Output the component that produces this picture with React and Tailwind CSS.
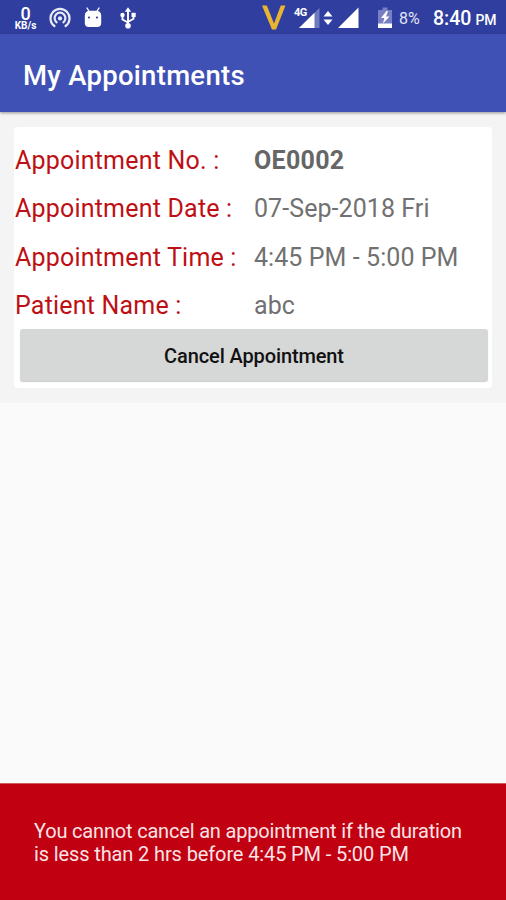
import React from 'react';

const appointment = [
  { label: 'Appointment No. :', value: 'OE0002', bold: true },
  { label: 'Appointment Date :', value: '07-Sep-2018 Fri' },
  { label: 'Appointment Time :', value: '4:45 PM - 5:00 PM' },
  { label: 'Patient Name :', value: 'abc' },
];

const HotspotIcon = () => (
  <svg className="ml-[11px] h-[22px] w-[22px] shrink-0" viewBox="0 0 22 22" fill="none" stroke="#e8eaf6" strokeWidth="2.2" strokeLinecap="round">
    <path d="M5.4 19a9.500 9.500 0 1 1 11.200 0" />
    <path d="M7.600 15.300a5.400 5.400 0 1 1 6.800 0" />
    <circle cx="11" cy="11.400" r="2.100" fill="#e8eaf6" stroke="none" />
  </svg>
);

const AndroidIcon = () => (
  <svg className="ml-[13px] h-[22px] w-[18px] shrink-0" viewBox="0 0 18 22">
    <path d="M3 1l2.500 4M15 1l-2.500 4" stroke="#fff" strokeWidth="1.4" strokeLinecap="round" />
    <path d="M0.800 8.500c0-3 2-4.800 5-4.800h6.400c3 0 5 1.800 5 4.800V16a4 4 0 0 1-4 4H4.800a4 4 0 0 1-4-4z" fill="#fff" />
    <circle cx="5" cy="10.500" r="1.100" fill="#303f9f" />
    <circle cx="13" cy="10.500" r="1.100" fill="#303f9f" />
  </svg>
);

const UsbIcon = () => (
  <svg className="ml-[18px] h-[22px] w-4 shrink-0" viewBox="0 0 16 22" fill="none" stroke="#fff" strokeWidth="1.9">
    <path d="M8 3v15M8 15.500l-5.500-3V8.500M8 14.800l5.500-3V8" />
    <path d="M8 0.300l3.200 4.500H4.800z" fill="#fff" stroke="none" />
    <circle cx="2.500" cy="8" r="2.200" fill="#fff" stroke="none" />
    <path d="M11.500 5.800h4.200V10h-4.200z" fill="#fff" stroke="none" />
    <circle cx="8" cy="18.800" r="2.800" fill="#fff" stroke="none" />
  </svg>
);

const VIcon = () => (
  <svg className="h-[26px] w-6 shrink-0" viewBox="0 0 24 26">
    <path d="M0 0.500h4.800l7.200 18L18.800 0.500h4.700L14 24.500h-4z" fill="#e9b530" />
  </svg>
);

const FirstSignal = () => (
  <div className="relative ml-2 h-[22px] w-[26px] shrink-0">
    <svg className="h-full w-full" viewBox="0 0 26 22">
      <path d="M25.500 1v20H5z" fill="#6f7abf" />
      <path d="M20.500 5.800V21H5z" fill="#fff" />
    </svg>
    <span className="absolute top-0 left-0 text-[11px] leading-[11px] font-bold tracking-[-0.5px]">4G</span>
  </div>
);

const DataArrows = () => (
  <svg className="ml-[3px] h-[14px] w-[10px] shrink-0" viewBox="0 0 10 14" fill="#fff">
    <path d="M5 0l4.500 5.500h-9zM5 14L0.500 8.500h9z" />
  </svg>
);

const SecondSignal = () => (
  <svg className="ml-[5px] h-[22px] w-[21px] shrink-0" viewBox="0 0 21 22">
    <path d="M20.500 0.500V21H0z" fill="#fff" />
  </svg>
);

const BatteryIcon = () => (
  <svg className="ml-[19px] h-[22px] w-[14px] shrink-0" viewBox="0 0 14 22">
    <path d="M4.500 0.500h5v2.500H14V17H0V3h4.500z" fill="#7680c3" />
    <path d="M0 16.500h14V21H0z" fill="#fff" />
    <path d="M8.500 4L3 11h3.300L5 16.500 11.500 9.500H8L10 4z" fill="#fff" />
  </svg>
);

const StatusBar = () => (
  <div className="flex h-[34px] shrink-0 items-center bg-[#303f9f] pt-[2px] pl-[13px] text-white">
    <div className="flex w-[25px] shrink-0 flex-col items-center">
      <span className="text-[18px] leading-[15px] font-medium">0</span>
      <span className="text-[10px] leading-[10px] font-bold whitespace-nowrap">KB/s</span>
    </div>
    <HotspotIcon />
    <AndroidIcon />
    <UsbIcon />
    <div className="ml-auto flex items-center">
      <VIcon />
      <FirstSignal />
      <DataArrows />
      <SecondSignal />
      <BatteryIcon />
      <span className="ml-[7px] w-[22px] pt-px text-[16px] whitespace-nowrap text-[#e0e3f5]">8%</span>
      <div className="ml-3 flex w-[73px] items-baseline pt-[2px] font-medium whitespace-nowrap">
        <span className="text-[19.500px]">8:40</span>
        <span className="ml-1 text-[14px]">PM</span>
      </div>
    </div>
  </div>
);

const MyAppointments = () => {
  return (
    <div className="flex h-[900px] w-[506px] flex-col overflow-hidden bg-[#fafafa] font-[Roboto,sans-serif]">
      <StatusBar />

      <header className="relative flex h-[78px] shrink-0 items-center bg-[#3f51b5] pt-[6px] pl-[23px] shadow-[0_1px_3px_rgba(0,0,0,0.4)]">
        <h1 className="text-[27.500px] font-medium tracking-[0.280px] whitespace-nowrap text-white">My Appointments</h1>
      </header>

      {/* Appointment card */}
      <main className="h-[291px] shrink-0 bg-[#f4f4f4] px-[14px] pt-[15px]">
        <div className="flex h-[261px] flex-col rounded-[4px] bg-white pt-2">
          {appointment.map((row) => (
            <div key={row.label} className="flex h-[48.500px] items-center pt-[2px] text-[25px] whitespace-nowrap">
              <span className="w-[240px] shrink-0 pl-px tracking-[0.200px] text-[#be0f14]">{row.label}</span>
              <span className={row.bold ? 'font-bold tracking-[0.300px] text-[#666]' : 'tracking-[0.070px] text-[#717171]'}>
                {row.value}
              </span>
            </div>
          ))}
          <button className="mr-1 ml-[6px] h-[52px] shrink-0 rounded-[3px] bg-[#d6d7d7] pt-[2px] text-[20px] font-medium tracking-[-0.120px] text-[#111] shadow-[0_1px_1px_rgba(0,0,0,0.2)]">
            Cancel Appointment
          </button>
        </div>
      </main>

      {/* Cancel warning */}
      <footer className="mt-auto h-[117px] shrink-0 border-t border-[#cf5a5c] bg-[#c10012] pt-[36px] pl-[34px] text-[20px] leading-[23px] tracking-[-0.180px] whitespace-nowrap text-[#fbe4e5]">
        <p>You cannot cancel an appointment if the duration</p>
        <p className="tracking-[-0.120px]">is less than 2 hrs before 4:45 PM - 5:00 PM</p>
      </footer>
    </div>
  );
};

export default MyAppointments;
